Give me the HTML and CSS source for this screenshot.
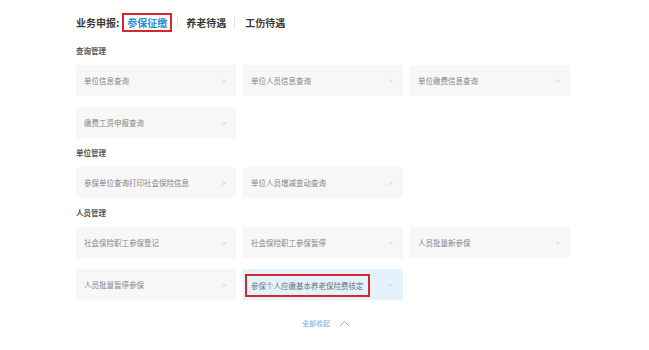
FILE: index.html
```html
<!DOCTYPE html>
<html lang="zh-CN">
<head>
    <meta charset="UTF-8">
    <title>业务申报</title>
    <link rel="stylesheet" href="styles.css">
</head>
<body>

    <div class="container">
        <!-- Top tabs -->
        <div class="tabs">
            <span class="tabs-label">业务申报:</span>
            <span class="tab active">参保征缴</span>
            <span class="tab-sep"></span>
            <span class="tab">养老待遇</span>
            <span class="tab-sep"></span>
            <span class="tab">工伤待遇</span>
        </div>

        <!-- 查询管理 -->
        <h3 class="group-title first">查询管理</h3>
        <div class="grid">
            <a class="item"><span>单位信息查询</span><i>&gt;</i></a>
            <a class="item"><span>单位人员信息查询</span><i>&gt;</i></a>
            <a class="item"><span>单位缴费信息查询</span><i>&gt;</i></a>
            <a class="item"><span>缴费工资申报查询</span><i>&gt;</i></a>
        </div>

        <!-- 单位管理 -->
        <h3 class="group-title">单位管理</h3>
        <div class="grid">
            <a class="item"><span>参保单位查询打印社会保险信息</span><i>&gt;</i></a>
            <a class="item"><span>单位人员增减变动查询</span><i>&gt;</i></a>
        </div>

        <!-- 人员管理 -->
        <h3 class="group-title">人员管理</h3>
        <div class="grid">
            <a class="item"><span>社会保险职工参保登记</span><i>&gt;</i></a>
            <a class="item"><span>社会保险职工参保暂停</span><i>&gt;</i></a>
            <a class="item"><span>人员批量新参保</span><i>&gt;</i></a>
            <a class="item"><span>人员批量暂停参保</span><i>&gt;</i></a>
            <a class="item hover"><span class="marked">参保个人应缴基本养老保险费核定</span><i>&gt;</i></a>
        </div>

        <div class="collapse">
            全部收起
            <svg width="11" height="7" viewBox="0 0 11 7"><path d="M1 6 L5.5 1.5 L10 6" fill="none" stroke="#7ab6dc" stroke-width="1"/></svg>
        </div>
    </div>

</body>
</html>
```

FILE: styles.css
```css
/* General reset */
* {
    margin: 0;
    padding: 0;
    box-sizing: border-box;
}

body {
    font-family: "Noto Sans CJK SC", "Noto Sans", sans-serif;
    background-color: #FFFFFF;
    width: 649px;
    height: 350px;
    overflow: hidden;
}

.container {
    padding: 13px 0 0 76px;
}

/* Tabs header */
.tabs {
    display: flex;
    align-items: center;
    height: 19px;
    font-size: 10px;
    font-weight: 700;
    color: #3A3A3A;
}

.tabs-label {
    margin-right: 3px;
}

.tab {
    line-height: 15px;
    padding: 0 4px;
}

.tab.active {
    color: #2A8AD2;
    border: 2px solid #D8262B;
    padding: 0 3px;
    height: 19px;
    line-height: 15px;
}

.tab-sep {
    width: 1px;
    height: 11px;
    background: #E2E2E2;
    margin: 0 4px 0 5px;
}

.tab-sep + .tab + .tab-sep {
    margin: 0 6px 0 4px;
}

/* Group titles */
.group-title {
    font-size: 7.5px;
    font-weight: 700;
    color: #555555;
    line-height: 14px;
    margin: 8px 0 7px;
}

.group-title.first {
    margin-top: 12px;
}

/* Items grid */
.grid {
    display: grid;
    grid-template-columns: repeat(3, 160px);
    column-gap: 7px;
    row-gap: 11px;
}

.item {
    display: flex;
    align-items: center;
    justify-content: space-between;
    height: 31px;
    padding: 0 10px 0 8px;
    background-color: #F7F7F7;
    font-size: 7.5px;
    color: #858585;
    text-decoration: none;
}

.item i {
    font-style: normal;
    color: #CFCFCF;
    font-size: 8px;
}

.item.hover {
    background-color: #E4F3FB;
}

/* red outline around the highlighted entry */
.marked {
    border: 2px solid #D8262B;
    padding: 4px 4px;
    margin-left: -6px;
    margin-top: 2px;
    color: #707070;
}

/* Collapse link */
.collapse {
    display: flex;
    align-items: center;
    justify-content: center;
    gap: 9px;
    width: 500px;
    margin-top: 18px;
    font-size: 7px;
    color: #6AAEDB;
}
```
